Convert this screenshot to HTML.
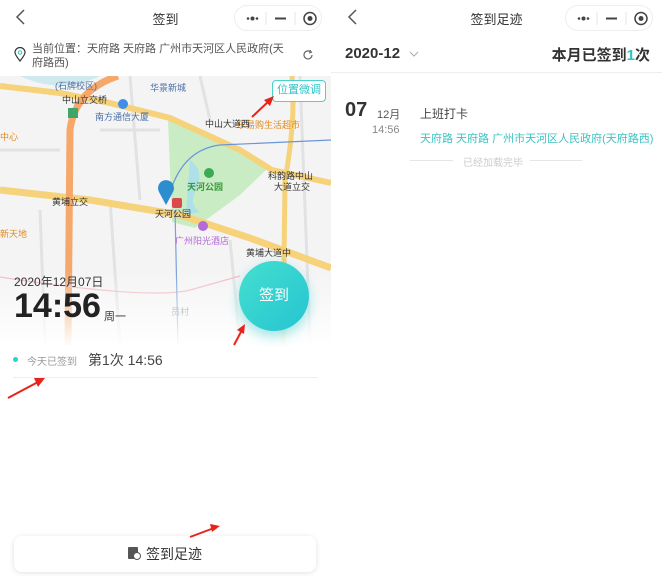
<!DOCTYPE html>
<html><head><meta charset="utf-8"><style>
*{margin:0;padding:0;box-sizing:border-box}
body{width:662px;height:576px;background:#fff;font-family:"Liberation Sans","Noto Sans CJK SC",sans-serif;position:relative;overflow:hidden;color:#333}
.a{position:absolute;white-space:nowrap}
.cap{position:absolute;top:5px;width:88px;height:26px;border:1px solid #eee;border-radius:13px;background:#fff}
</style></head><body>
<svg class="a" style="left:14px;top:8px" width="14" height="18"><path d="M10 2 L3 9 L10 16" stroke="#555" stroke-width="1.5" fill="none"/></svg>
<div class="a" style="left:0;width:331px;top:9px;text-align:center;font-size:13px;color:#333">签到</div>
<div class="cap" style="left:234px"><svg width="88" height="26"><circle cx="13" cy="12.5" r="1.3" fill="#444"/><circle cx="17.5" cy="12.5" r="2" fill="#444"/><circle cx="22" cy="12.5" r="1.3" fill="#444"/><line x1="31" y1="6" x2="31" y2="19" stroke="#e5e5e5"/><line x1="40" y1="12.5" x2="51" y2="12.5" stroke="#444" stroke-width="2"/><line x1="60" y1="6" x2="60" y2="19" stroke="#e5e5e5"/><circle cx="75" cy="12.5" r="6" stroke="#444" stroke-width="1.5" fill="none"/><circle cx="75" cy="12.5" r="2.5" fill="#444"/></svg></div>
<svg class="a" style="left:14px;top:47px" width="12" height="16"><path d="M6 14 C2 9 1 7 1 5.5 A5 5 0 0 1 11 5.5 C11 7 10 9 6 14Z" stroke="#333" stroke-width="1.2" fill="none"/><circle cx="6" cy="5.5" r="1.7" stroke="#2cc" fill="none"/></svg>
<div class="a" style="left:32px;top:42px;font-size:11px;line-height:14px;color:#555;white-space:normal;width:256px;word-break:break-all">当前位置：天府路 天府路 广州市天河区人民政府(天府路西)</div>
<svg class="a" style="left:302px;top:49px" width="12" height="12"><path d="M10 6 A4 4 0 1 1 8.5 2.8" stroke="#666" stroke-width="1.2" fill="none"/><path d="M8 1 L9.5 3.3 L7 4" stroke="#666" fill="none"/></svg>
<svg class="a" style="left:0;top:76px" width="331" height="272" viewBox="0 76 331 272">
<defs><linearGradient id="f" x1="0" y1="0" x2="0" y2="1"><stop offset="0" stop-color="#fff" stop-opacity="0"/><stop offset="1" stop-color="#fff" stop-opacity="1"/></linearGradient></defs>
<rect x="0" y="76" width="331" height="272" fill="#f4f4f5"/>
<path d="M20 76 Q60 95 100 76Z" fill="#cfe9ee"/>
<g stroke="#e2e2e4" stroke-width="3" fill="none"><path d="M0 150 L60 150"/><path d="M130 76 L140 200"/><path d="M100 130 L160 130"/><path d="M40 210 L45 345"/><path d="M110 200 L120 345"/><path d="M200 76 L210 120"/><path d="M300 76 L310 340"/><path d="M230 240 L240 345"/></g>
<polygon points="168,119 205,135 245,150 268,168 240,195 195,228 172,222" fill="#c9ecc5"/>
<path d="M190 160 Q205 170 196 190 Q188 205 200 212 L186 215 Z" fill="#aee0e8"/>
<path d="M0 86 L60 93 L110 103 L170 118 L240 150 L272 170 L331 183" stroke="#f6d27a" stroke-width="6" fill="none"/>
<path d="M0 190 L90 200 L180 215 L250 238 L331 268" stroke="#f6d27a" stroke-width="7" fill="none"/>
<path d="M118 76 Q75 90 70 130 L68 345" stroke="#f5a86a" stroke-width="7" fill="none"/>
<path d="M292 76 Q296 120 285 180 L283 345" stroke="#f6d27a" stroke-width="5" fill="none"/>
<path d="M0 277 Q150 300 190 290 L240 276" stroke="#f2b9c0" stroke-width="1.2" fill="none"/>
<path d="M168 200 Q180 150 220 145 L331 140" stroke="#6a96d6" stroke-width="1.2" fill="none"/>
<path d="M175 210 L178 345" stroke="#7aa0d8" stroke-width="1.2" fill="none"/>
<path d="M68 108 l10 0 l0 10 l-10 0z" fill="#3fa66a"/>
<circle cx="123" cy="104" r="5" fill="#3f8ee8"/>
<circle cx="209" cy="173" r="5" fill="#3aaa55"/>
<circle cx="203" cy="226" r="5" fill="#b36ad8"/>
<rect x="172" y="198" width="10" height="10" rx="2" fill="#d94a4a"/>
<path d="M166 205 L159 192 A8 8 0 1 1 173 192Z" fill="#2d8ecf"/>
<g font-size="9" font-family="Liberation Sans,Noto Sans CJK SC,sans-serif">
<text x="55" y="89" fill="#4a6fa5">(石牌校区)</text><text x="150" y="91" fill="#4a6fa5">华景新城</text>
<text x="62" y="103" fill="#333">中山立交桥</text><text x="95" y="120" fill="#4a6fa5">南方通信大厦</text>
<text x="237" y="128" fill="#e08a1e">乐易购生活超市</text><text x="0" y="140" fill="#e08a1e">中心</text>
<text x="205" y="127" fill="#333">中山大道西</text><text x="268" y="179" fill="#333">科韵路中山</text><text x="274" y="190" fill="#333">大道立交</text>
<text x="187" y="190" fill="#3a9a3a" font-weight="bold">天河公园</text><text x="155" y="217" fill="#333">天河公园</text>
<text x="52" y="205" fill="#333">黄埔立交</text><text x="175" y="244" fill="#b36ad8">广州阳光酒店</text><text x="0" y="237" fill="#e08a1e">新天地</text>
<text x="246" y="256" fill="#333">黄埔大道中</text><text x="171" y="315" fill="#888">员村</text></g>
<rect x="0" y="270" width="331" height="78" fill="url(#f)"/>
</svg>
<div class="a" style="left:272px;top:80px;width:54px;height:22px;border:1.5px solid #48d3d0;border-radius:4px;background:#fff;font-size:11px;color:#2cc4c4;text-align:center;line-height:19px">位置微调</div>
<div class="a" style="left:14px;top:273px;font-size:12px;color:#333">2020年12月07日</div>
<div class="a" style="left:14px;top:287px;font-size:34px;font-weight:bold;color:#222">14:56</div>
<div class="a" style="left:104px;top:308px;font-size:11px;color:#333">周一</div>
<div class="a" style="left:239px;top:261px;width:70px;height:70px;border-radius:50%;background:linear-gradient(135deg,#45dfcf,#25c4d2);box-shadow:0 5px 12px rgba(40,200,200,.45);color:#fff;font-size:15px;text-align:center;line-height:70px">签到</div>
<div class="a" style="left:13px;top:357px;width:5px;height:5px;border-radius:50%;background:#2cd0d0"></div>
<div class="a" style="left:27px;top:353px;font-size:10px;color:#999">今天已签到</div>
<div class="a" style="left:88px;top:350px;font-size:14px;color:#444">第1次 14:56</div>
<div class="a" style="left:13px;top:377px;width:305px;height:1px;background:#eee"></div>
<div class="a" style="left:14px;top:536px;width:302px;height:36px;border-radius:8px;background:#fff;box-shadow:0 1px 6px rgba(0,0,0,.12)"></div>
<svg class="a" style="left:127px;top:546px" width="14" height="14"><rect x="1" y="1" width="10" height="12" rx="1" fill="#555"/><circle cx="10" cy="10" r="3.5" fill="#fff" stroke="#555"/></svg>
<div class="a" style="left:146px;top:544px;font-size:14px;color:#333">签到足迹</div>
<svg class="a" style="left:0;top:0" width="331" height="576"><g stroke="#e8231c" stroke-width="2" fill="#e8231c">
<line x1="252" y1="117" x2="270" y2="100"/><polygon points="274,96 264,100 270,106" stroke="none"/>
<line x1="234" y1="345" x2="242" y2="330"/><polygon points="245,324 237,330 244,334" stroke="none"/>
<line x1="8" y1="398" x2="38" y2="382"/><polygon points="45,378 34,378 38,387" stroke="none"/>
<line x1="190" y1="537" x2="214" y2="528"/><polygon points="220,526 210,524 212,532" stroke="none"/></g></svg>
<svg class="a" style="left:346px;top:8px" width="14" height="18"><path d="M10 2 L3 9 L10 16" stroke="#555" stroke-width="1.5" fill="none"/></svg>
<div class="a" style="left:331px;width:331px;top:9px;text-align:center;font-size:13px;color:#333">签到足迹</div>
<div class="cap" style="left:565px"><svg width="88" height="26"><circle cx="13" cy="12.5" r="1.3" fill="#444"/><circle cx="17.5" cy="12.5" r="2" fill="#444"/><circle cx="22" cy="12.5" r="1.3" fill="#444"/><line x1="31" y1="6" x2="31" y2="19" stroke="#e5e5e5"/><line x1="40" y1="12.5" x2="51" y2="12.5" stroke="#444" stroke-width="2"/><line x1="60" y1="6" x2="60" y2="19" stroke="#e5e5e5"/><circle cx="75" cy="12.5" r="6" stroke="#444" stroke-width="1.5" fill="none"/><circle cx="75" cy="12.5" r="2.5" fill="#444"/></svg></div>
<div class="a" style="left:345px;top:45px;font-size:15px;font-weight:bold;color:#333">2020-12</div>
<svg class="a" style="left:409px;top:50px" width="10" height="8"><path d="M1 2 L5 6 L9 2" stroke="#aaa" fill="none"/></svg>
<div class="a" style="right:12px;top:44px;font-size:15px;font-weight:bold;color:#333">本月已签到<span style="color:#2cc4c4">1</span>次</div>
<div class="a" style="left:331px;top:72px;width:331px;height:1px;background:#eee"></div>
<div class="a" style="left:345px;top:99px;font-size:20px;font-weight:bold;color:#333">07</div>
<div class="a" style="left:377px;top:106px;font-size:11px;color:#555">12月</div>
<div class="a" style="left:372px;top:124px;font-size:11px;color:#888">14:56</div>
<div class="a" style="left:420px;top:105px;font-size:12px;color:#444">上班打卡</div>
<div class="a" style="left:420px;top:130px;font-size:11px;color:#3cc3c0">天府路 天府路 广州市天河区人民政府(天府路西)</div>
<div class="a" style="left:410px;top:160px;width:43px;height:1px;background:#e5e5e5"></div>
<div class="a" style="left:463px;top:154px;font-size:10px;color:#ccc">已经加载完毕</div>
<div class="a" style="left:530px;top:160px;width:52px;height:1px;background:#e5e5e5"></div>
</body></html>
